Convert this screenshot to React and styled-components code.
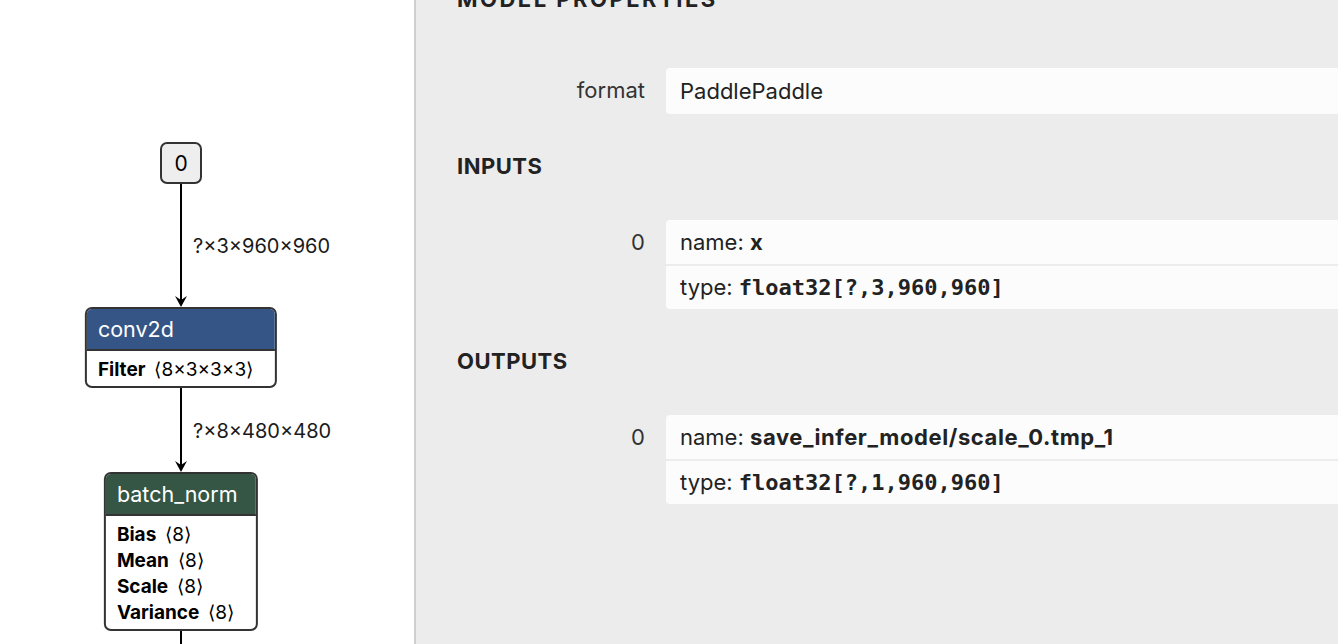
import React from 'react';
import styled, { createGlobalStyle } from 'styled-components';

const Global = createGlobalStyle`
  html, body { margin: 0; padding: 0; height: 100%; overflow: hidden; }
  body { font-family: Inter, "Noto Sans", sans-serif; color: #222; }
`;

const Shell = styled.div`
  display: flex;
  width: 1338px;
  height: 644px;
  overflow: hidden;
`;

/* ---------- graph canvas ---------- */
const Canvas = styled.div`
  position: relative;
  flex: none;
  width: 414px;
  height: 100%;
  background: #fff;
  border-right: 2px solid #cfcfcf;
  overflow: hidden;
`;

const Edges = styled.svg`
  position: absolute;
  left: 0;
  top: 0;
  width: 414px;
  height: 644px;
`;

const EdgeLabel = styled.div`
  position: absolute;
  left: 193px;
  top: ${p => p.$y}px;
  transform: translateY(-50%);
  font-size: 20px;
  line-height: 1;
  color: #1a1a1a;
  white-space: nowrap;
`;

const Node = styled.div`
  position: absolute;
  left: 181px;
  top: ${p => p.$top}px;
  transform: translateX(-50%);
  border: 2px solid #333;
  border-radius: 7px;
  overflow: hidden;
  background: #fff;
  white-space: nowrap;
`;

const InputNode = styled(Node)`
  width: 38px;
  height: 38px;
  display: flex;
  align-items: center;
  justify-content: center;
  background: #eee;
  font-size: 21px;
  color: #000;
`;

const NodeHeader = styled.div`
  height: 40px;
  line-height: 41px;
  padding: 0 11px;
  background: ${p => p.$color};
  color: #fff;
  font-size: 21.5px;
  border-bottom: 2px solid #333;
`;

const NodeBody = styled.div`
  padding: 6px 22px 3px 11px;
  font-size: 19px;
  line-height: 26px;
  color: #000;
`;

const Attr = styled.div`
  & b { font-weight: 700; margin-right: 9px; }
`;

const Arrow = ({ x, y }) => (
  <path d={`M${x - 6} ${y - 11} L${x} ${y} L${x + 6} ${y - 11} L${x} ${y - 7} Z`} fill="#000" />
);

/* ---------- sidebar ---------- */
const Sidebar = styled.div`
  flex: 1;
  min-width: 0;
  background: #ececec;
  overflow: hidden;
  padding-left: 41px;
  font-size: 22px;
`;

const Content = styled.div`
  margin-top: -14px;
`;

const Section = styled.section`
  margin-bottom: 39px;
`;

const Heading = styled.div`
  font-weight: 700;
  font-size: 22px;
  line-height: 26px;
  letter-spacing: ${p => p.$spacing || 0.5}px;
  color: #222;
  margin-bottom: ${p => p.$gap}px;
`;

const Item = styled.div`
  display: grid;
  grid-template-columns: 188px 1fr;
  column-gap: 21px;
`;

const Label = styled.div`
  text-align: right;
  line-height: 44px;
  color: #333;
`;

const Value = styled.div`
  background: #fcfcfc;
  border-radius: 4px 0 0 4px;
  margin-right: -8px;
`;

const Row = styled.div`
  height: ${p => p.$h || 44}px;
  line-height: ${p => p.$h || 44}px;
  padding-left: 14px;
  white-space: nowrap;
  color: #222;
  & + & { border-top: 2px solid #ececec; }
  & b { font-weight: 700; letter-spacing: 0.6px; }
`;

const Mono = styled.span`
  font-family: "DejaVu Sans Mono", monospace;
  font-weight: 700;
  font-size: 22px;
`;

export default function App() {
  return (
    <>
      <Global />
      <Shell>
        <Canvas>
          <Edges viewBox="0 0 414 644">
            <line x1="181" y1="184" x2="181" y2="305" stroke="#000" strokeWidth="2" />
            <Arrow x={181} y={307} />
            <line x1="181" y1="388" x2="181" y2="470" stroke="#000" strokeWidth="2" />
            <Arrow x={181} y={472} />
            <line x1="181" y1="628" x2="181" y2="644" stroke="#000" strokeWidth="2" />
          </Edges>
          <InputNode $top={142}>0</InputNode>
          <EdgeLabel $y={246}>?×3×960×960</EdgeLabel>
          <Node $top={307}>
            <NodeHeader $color="#355586">conv2d</NodeHeader>
            <NodeBody>
              <Attr><b>Filter</b>⟨8×3×3×3⟩</Attr>
            </NodeBody>
          </Node>
          <EdgeLabel $y={431}>?×8×480×480</EdgeLabel>
          <Node $top={472}>
            <NodeHeader $color="#355545">batch_norm</NodeHeader>
            <NodeBody>
              <Attr><b>Bias</b>⟨8⟩</Attr>
              <Attr><b>Mean</b>⟨8⟩</Attr>
              <Attr><b>Scale</b>⟨8⟩</Attr>
              <Attr><b>Variance</b>⟨8⟩</Attr>
            </NodeBody>
          </Node>
        </Canvas>
        <Sidebar>
          <Content>
            <Section>
              <Heading $gap={56} $spacing={2.5}>MODEL PROPERTIES</Heading>
              <Item>
                <Label>format</Label>
                <Value><Row $h={46}>PaddlePaddle</Row></Value>
              </Item>
            </Section>
            <Section>
              <Heading $gap={41}>INPUTS</Heading>
              <Item>
                <Label>0</Label>
                <Value>
                  <Row>name: <b>x</b></Row>
                  <Row $h={43}>type: <Mono>float32[?,3,960,960]</Mono></Row>
                </Value>
              </Item>
            </Section>
            <Section>
              <Heading $gap={41}>OUTPUTS</Heading>
              <Item>
                <Label>0</Label>
                <Value>
                  <Row>name: <b>save_infer_model/scale_0.tmp_1</b></Row>
                  <Row $h={43}>type: <Mono>float32[?,1,960,960]</Mono></Row>
                </Value>
              </Item>
            </Section>
          </Content>
        </Sidebar>
      </Shell>
    </>
  );
}
